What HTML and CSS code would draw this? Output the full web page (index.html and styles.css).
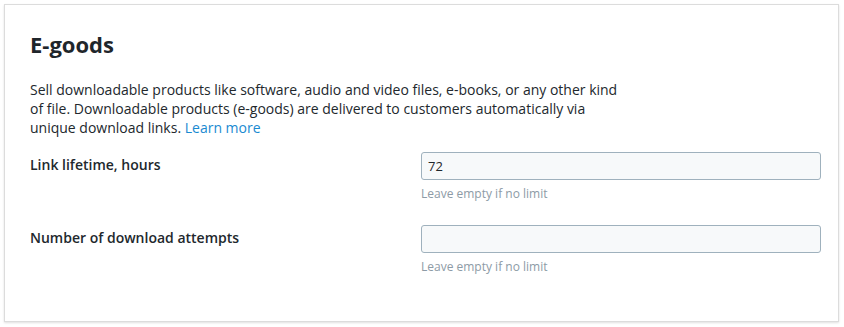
FILE: index.html
```html
<!DOCTYPE html>
<html lang="en">
<head>
  <meta charset="UTF-8">
  <title>E-goods</title>
  <link rel="stylesheet" href="styles.css">
</head>
<body>
  <div class="card">
    <h1 class="card-title">E-goods</h1>
    <p class="intro">Sell downloadable products like software, audio and video files, e-books, or any other kind of file. Downloadable products (e-goods) are delivered to customers automatically via unique download links. <a href="#" class="link">Learn more</a></p>

    <div class="fields">
      <div class="field">
        <label class="field-name" for="lifetime">Link lifetime, hours</label>
        <div class="field-control">
          <input type="text" id="lifetime" class="input" value="72">
          <div class="hint">Leave empty if no limit</div>
        </div>
      </div>

      <div class="field">
        <label class="field-name" for="attempts">Number of download attempts</label>
        <div class="field-control">
          <input type="text" id="attempts" class="input" value="">
          <div class="hint">Leave empty if no limit</div>
        </div>
      </div>
    </div>
  </div>
</body>
</html>
```

FILE: styles.css
```css
body {
  margin: 0;
  padding: 4px 5px 4px 4px;
  background: #ffffff;
  font-family: "Open Sans", Arial, sans-serif;
  color: #22282d;
}

.card {
  border: 1px solid #dcdcdc;
  box-shadow: 0 1px 2px rgba(0, 0, 0, 0.12);
  padding: 25px 17px 46px 25px;
}

.card-title {
  margin: 0;
  font-size: 22px;
  font-weight: 700;
  line-height: 28px;
  color: #1f262b;
}

.intro {
  margin: 22px 0 15px;
  max-width: 600px;
  font-size: 14px;
  line-height: 19px;
}

.link {
  color: #1a8ad1;
  text-decoration: none;
}

.fields {
  display: flex;
  flex-direction: column;
  gap: 23px;
}

.field {
  display: grid;
  grid-template-columns: 391px 1fr;
}

.field-name {
  font-size: 14px;
  font-weight: 600;
  line-height: 18px;
  padding-top: 4px;
}

.input {
  display: block;
  box-sizing: border-box;
  width: 100%;
  height: 28px;
  margin: 0;
  padding: 0 6px;
  border: 1px solid #9fb1bd;
  border-radius: 3px;
  background: #f7f9fa;
  font-family: inherit;
  font-size: 13px;
  color: #1f262b;
}

.hint {
  margin-top: 5px;
  font-size: 12px;
  line-height: 17px;
  color: #8d9ba6;
}
```
